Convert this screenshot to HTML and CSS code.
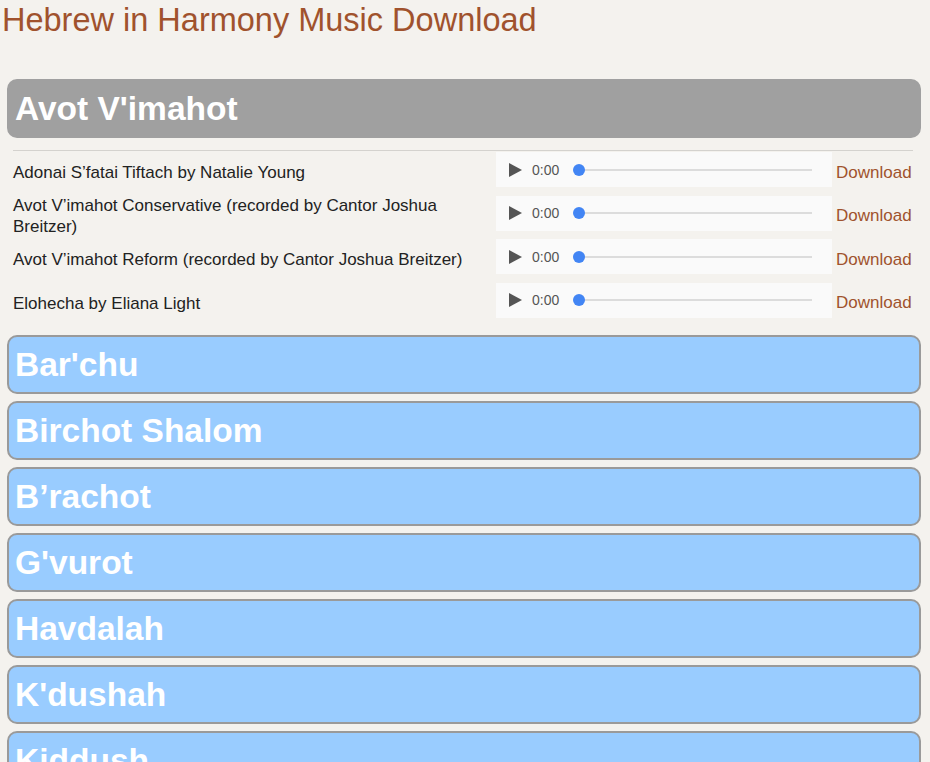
FILE: index.html
```
<html>

<head>
    <link rel="stylesheet" href="styles.css">
</head>

<body>
    <h1 class="title">Hebrew in Harmony Music Download</h1>
    <div class="page">
        <div class="section">
            <h2 class="section-head grey">Avot V'imahot</h2>
            <div class="tracks">
                <div class="track">
                    <span class="track-name">Adonai S’fatai Tiftach by Natalie Young</span>
                    <div class="player">
                        <span class="play"></span>
                        <span class="time">0:00</span>
                        <span class="bar"><span class="knob"></span></span>
                    </div>
                    <a class="download" href="#">Download</a>
                </div>
                <div class="track">
                    <span class="track-name">Avot V’imahot Conservative (recorded by Cantor Joshua Breitzer)</span>
                    <div class="player">
                        <span class="play"></span>
                        <span class="time">0:00</span>
                        <span class="bar"><span class="knob"></span></span>
                    </div>
                    <a class="download" href="#">Download</a>
                </div>
                <div class="track">
                    <span class="track-name">Avot V’imahot Reform (recorded by Cantor Joshua Breitzer)</span>
                    <div class="player">
                        <span class="play"></span>
                        <span class="time">0:00</span>
                        <span class="bar"><span class="knob"></span></span>
                    </div>
                    <a class="download" href="#">Download</a>
                </div>
                <div class="track">
                    <span class="track-name">Elohecha by Eliana Light</span>
                    <div class="player">
                        <span class="play"></span>
                        <span class="time">0:00</span>
                        <span class="bar"><span class="knob"></span></span>
                    </div>
                    <a class="download" href="#">Download</a>
                </div>
            </div>
        </div>
        <h2 class="section-head">Bar'chu</h2>
        <h2 class="section-head">Birchot Shalom</h2>
        <h2 class="section-head">B’rachot</h2>
        <h2 class="section-head">G'vurot</h2>
        <h2 class="section-head">Havdalah</h2>
        <h2 class="section-head">K'dushah</h2>
        <h2 class="section-head">Kiddush</h2>
        <h2 class="section-head">Mi Chamocha</h2>
        <h2 class="section-head">Sh'ma</h2>
    </div>
</body>

</html>
```

FILE: styles.css
```
* {
    margin: 0;
    box-sizing: border-box;
}

body {
    background-color: #f4f2ee;
    font-family: "Liberation Sans", Arial, sans-serif;
    color: #222;
}

.title {
    margin-top: 2px;
    padding-left: 2px;
    font-size: 32.5px;
    font-weight: normal;
    line-height: 37px;
    color: #a0522d;
}

.page {
    display: flex;
    flex-direction: column;
    gap: 7px;
    padding: 40px 9px 20px 7px;
}

.section-head {
    height: 59px;
    line-height: 55px;
    padding-left: 6px;
    font-size: 33.5px;
    font-weight: bold;
    color: white;
    background-color: #99ccff;
    border: 2px solid #9a9a9a;
    border-radius: 10px;
}

.section-head.grey {
    background-color: #a0a0a0;
    border-color: #a0a0a0;
}

.tracks {
    margin: 12px 8px 3px 6px;
    border-top: 1px solid #d4d2ce;
}

.track {
    display: grid;
    grid-template-columns: 483px 336px 1fr;
    align-items: center;
    height: 43.5px;
}

.track-name {
    font-size: 17px;
    line-height: 21px;
    padding-right: 12px;
}

.player {
    align-self: start;
    margin-top: 1px;
    height: 35px;
    display: flex;
    align-items: center;
    padding: 0 20px 0 13px;
    background-color: #fafafa;
}

.play {
    width: 0;
    height: 0;
    border-top: 7px solid transparent;
    border-bottom: 7px solid transparent;
    border-left: 13px solid #555;
}

.time {
    margin-left: 10px;
    font-size: 14px;
    color: #555;
}

.bar {
    position: relative;
    flex: 1;
    height: 2px;
    margin-left: 20px;
    background-color: #dcdcdc;
}

.knob {
    position: absolute;
    left: -6px;
    top: -5px;
    width: 12px;
    height: 12px;
    border-radius: 50%;
    background-color: #4285f4;
}

.download {
    padding-left: 4px;
    font-size: 17px;
    color: #a0522d;
    text-decoration: none;
}
```
